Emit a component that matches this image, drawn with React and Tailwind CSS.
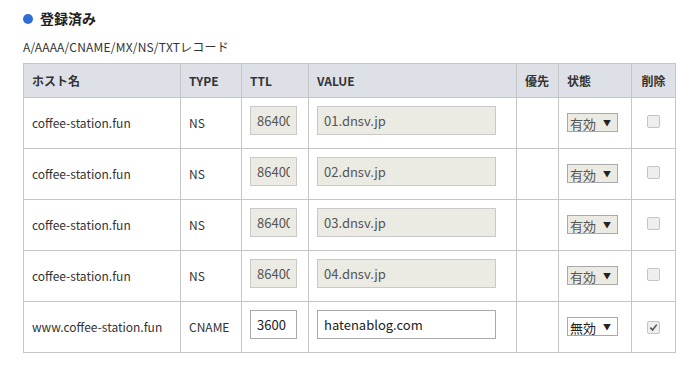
import { useState } from "react";

const rows = [
    { host: "coffee-station.fun", type: "NS", ttl: "86400", value: "01.dnsv.jp", fixed: true, status: "有効", del: false },
    { host: "coffee-station.fun", type: "NS", ttl: "86400", value: "02.dnsv.jp", fixed: true, status: "有効", del: false },
    { host: "coffee-station.fun", type: "NS", ttl: "86400", value: "03.dnsv.jp", fixed: true, status: "有効", del: false },
    { host: "coffee-station.fun", type: "NS", ttl: "86400", value: "04.dnsv.jp", fixed: true, status: "有効", del: false },
    { host: "www.coffee-station.fun", type: "CNAME", ttl: "3600", value: "hatenablog.com", fixed: false, status: "無効", del: true },
];

function Select({ label, disabled }) {
    return (
        <span
            className={
                "inline-flex items-center h-[19px] w-[51px] border border-[#a9a9a9] pl-[2px] text-[13px] leading-none " +
                (disabled ? "bg-[#ebebe4] text-[#555]" : "bg-white text-[#222]")
            }
        >
            <span className="mt-[2px]">{label}</span>
            <span className="ml-[7px] text-[8px] text-[#222]">▼</span>
        </span>
    );
}

function Check({ checked, disabled }) {
    return (
        <span className="inline-flex items-center justify-center w-[13px] h-[13px] rounded-[2px] border border-[#c4c4c4] bg-[#eeeeee]">
            {checked && (
                <svg viewBox="0 0 10 10" className="w-[9px] h-[9px]">
                    <path d="M1.5 5.2 L4 7.8 L8.6 1.8" fill="none" stroke={disabled ? "#999" : "#555"} strokeWidth="1.8" />
                </svg>
            )}
        </span>
    );
}

export default function App() {
    const [data] = useState(rows);

    return (
        <div className="w-[700px] h-[372px] bg-white text-[#333] font-['Noto_Sans_CJK_JP',sans-serif] overflow-hidden">
            {/* 見出し */}
            <div className="flex items-center pl-[23px] pt-[7px] h-[30px]">
                <span className="w-[10px] h-[10px] rounded-full bg-[#2f6ed3]" />
                <span className="ml-[7px] text-[14px] font-bold text-[#222]">登録済み</span>
            </div>
            <p className="pl-[23px] mt-[9px] text-[12px] leading-[16px] tracking-[0.2px] text-[#333]">A/AAAA/CNAME/MX/NS/TXTレコード</p>

            <table className="ml-[23px] mt-[8px] w-[652px] table-fixed border-collapse text-[12px]">
                <colgroup>
                    <col className="w-[157px]" />
                    <col className="w-[61px]" />
                    <col className="w-[67px]" />
                    <col className="w-[208px]" />
                    <col className="w-[42px]" />
                    <col className="w-[73px]" />
                    <col className="w-[44px]" />
                </colgroup>
                <thead>
                    <tr className="bg-[#dde1e7] h-[34px]">
                        <th className="border border-[#c6c6c6] px-[8px] text-left font-bold">ホスト名</th>
                        <th className="border border-[#c6c6c6] px-[8px] text-left font-bold">TYPE</th>
                        <th className="border border-[#c6c6c6] px-[8px] text-left font-bold">TTL</th>
                        <th className="border border-[#c6c6c6] px-[8px] text-left font-bold">VALUE</th>
                        <th className="border border-[#c6c6c6] px-[8px] text-left font-bold">優先</th>
                        <th className="border border-[#c6c6c6] px-[8px] text-left font-bold">状態</th>
                        <th className="border border-[#c6c6c6] px-[4px] text-center font-bold">削除</th>
                    </tr>
                </thead>
                <tbody>
                    {data.map((r, i) => (
                        <tr key={i} className="h-[51px]">
                            <td className="border border-[#c6c6c6] px-[8px]">{r.host}</td>
                            <td className="border border-[#c6c6c6] px-[8px]">{r.type}</td>
                            <td className="border border-[#c6c6c6] px-[8px]">
                                <input
                                    readOnly
                                    value={r.ttl}
                                    className={
                                        "block w-[47px] h-[29px] mb-[5px] px-[6px] border text-[13px] outline-none " +
                                        (r.fixed ? "bg-[#ebebe4] border-[#c9c9c9] text-[#555]" : "bg-white border-[#aaa] text-[#222]")
                                    }
                                />
                            </td>
                            <td className="border border-[#c6c6c6] px-[8px]">
                                <input
                                    readOnly
                                    value={r.value}
                                    className={
                                        "block w-[179px] h-[29px] mb-[5px] px-[6px] border text-[13px] outline-none " +
                                        (r.fixed ? "bg-[#ebebe4] border-[#c9c9c9] text-[#555]" : "bg-white border-[#aaa] text-[#222]")
                                    }
                                />
                            </td>
                            <td className="border border-[#c6c6c6]"></td>
                            <td className="border border-[#c6c6c6] px-[8px]">
                                <Select label={r.status} disabled={r.fixed} />
                            </td>
                            <td className="border border-[#c6c6c6] text-center">
                                <span className="inline-flex -mt-[6px] ml-[-1px]">
                                    <Check checked={r.del} disabled={r.fixed} />
                                </span>
                            </td>
                        </tr>
                    ))}
                </tbody>
            </table>
        </div>
    );
}
